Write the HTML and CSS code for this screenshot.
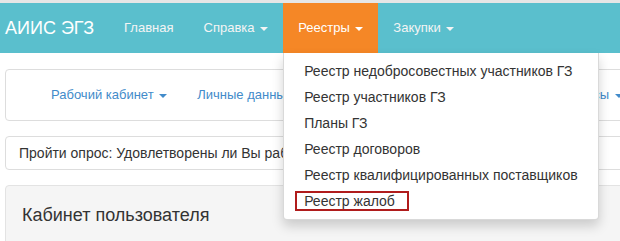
FILE: index.html
```html
<!DOCTYPE html>
<html lang="ru">
<head>
    <meta charset="UTF-8">
    <title>АИИС ЭГЗ</title>
    <link rel="stylesheet" href="styles.css">
</head>
<body>

    <header class="navbar">
        <a class="brand" href="#">АИИС ЭГЗ</a>
        <ul class="nav">
            <li><a href="#">Главная</a></li>
            <li><a href="#">Справка <span class="caret"></span></a></li>
            <li class="active dropdown">
                <a href="#">Реестры <span class="caret"></span></a>
                <ul class="dropdown-menu">
                    <li><a href="#">Реестр недобросовестных участников ГЗ</a></li>
                    <li><a href="#">Реестр участников ГЗ</a></li>
                    <li><a href="#">Планы ГЗ</a></li>
                    <li><a href="#">Реестр договоров</a></li>
                    <li><a href="#">Реестр квалифицированных поставщиков</a></li>
                    <li><a href="#"><span class="marked">Реестр жалоб</span></a></li>
                </ul>
            </li>
            <li><a href="#">Закупки <span class="caret"></span></a></li>
        </ul>
    </header>

    <main class="page">
        <div class="panel panel-nav">
            <ul class="subnav">
                <li><a href="#">Рабочий кабинет <span class="caret"></span></a></li>
                <li><a href="#">Личные данные</a></li>
                <li><a href="#">Мои закупки <span class="caret"></span></a></li>
                <li><a href="#">Договоры</a></li>
                <li><a href="#">Мои запросы <span class="caret"></span></a></li>
            </ul>
        </div>

        <div class="panel panel-poll">
            <a href="#">Пройти опрос: Удовлетворены ли Вы работой портала государственных закупок?</a>
        </div>

        <div class="well">
            <h3>Кабинет пользователя</h3>
        </div>
    </main>

</body>
</html>
```

FILE: styles.css
```css
html, body {
    margin: 0;
    overflow: hidden;
}

body {
    font-family: "Liberation Sans", Arial, sans-serif;
    font-size: 14px;
    line-height: 20px;
    color: #333;
    background: #fff;
}

a {
    text-decoration: none;
}

ul {
    list-style: none;
    margin: 0;
    padding: 0;
}

.caret {
    display: inline-block;
    width: 0;
    height: 0;
    margin-left: 2px;
    vertical-align: middle;
    border-top: 4px solid;
    border-left: 4px solid transparent;
    border-right: 4px solid transparent;
}

/* top bar */
.navbar {
    display: flex;
    height: 50px;
    padding-left: 5px;
    background-color: #5abfcd;
    border-top: 3px solid #e6e6e6;
}

.brand {
    padding-right: 15px;
    font-size: 18px;
    line-height: 50px;
    color: #fff;
}

.nav {
    display: flex;
}

.nav > li {
    position: relative;
}

.nav > li > a {
    display: block;
    padding: 0 15px;
    font-size: 13px;
    line-height: 50px;
    color: #f4f4f4;
}

.nav > li.active {
    background-color: #f58726;
}

.nav > li.active > a {
    color: #fff;
}

.dropdown-menu {
    position: absolute;
    top: 100%;
    left: 0;
    z-index: 10;
    padding: 5px 0;
    background: #fff;
    border: 1px solid rgba(0, 0, 0, 0.15);
    border-top: 0;
    border-radius: 0 0 4px 4px;
    box-shadow: 0 6px 12px rgba(0, 0, 0, 0.175);
}

.dropdown-menu li a {
    display: block;
    padding: 3px 20px;
    color: #333;
    white-space: nowrap;
}

.marked {
    margin-left: -9px;
    padding: 0 12px 0 7px;
    border: 2px solid #b01c1c;
}

/* page body */
.page {
    width: 1200px;
    padding: 16px 0 0 5px;
}

.panel {
    border: 1px solid #ddd;
    border-radius: 4px;
    margin-bottom: 15px;
}

.panel-nav {
    height: 50px;
    padding-left: 30px;
}

.subnav {
    display: flex;
}

.subnav a {
    display: block;
    padding: 0 15px;
    font-size: 13px;
    line-height: 50px;
    color: #428bca;
}

.panel-poll {
    padding: 6px 13px;
}

.panel-poll a {
    color: #333;
}

.well {
    min-height: 100px;
    padding: 18px 16px;
    background-color: #f5f5f5;
    border: 1px solid #e3e3e3;
    border-radius: 4px;
}

.well h3 {
    margin: 0;
    font-size: 18px;
    font-weight: normal;
    line-height: 22px;
}
```
